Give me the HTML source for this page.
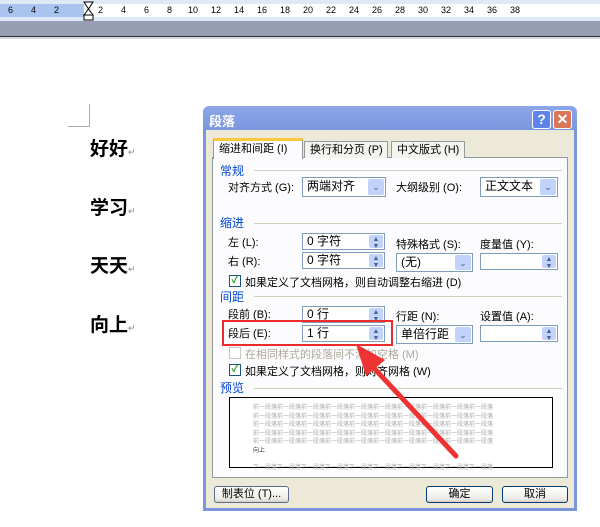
<!DOCTYPE html>
<html><head><meta charset="utf-8"><style>
*{margin:0;padding:0;box-sizing:border-box}
body{width:600px;height:527px;background:#fff;position:relative;overflow:hidden;font-family:"Liberation Sans","Noto Sans CJK SC",sans-serif;font-size:11px;color:#000}
.a{position:absolute;white-space:nowrap}
.doc{font-weight:bold;font-size:19px;left:90px}
.doc i{font-style:normal;font-weight:normal;font-size:9px;color:#888}
.grp{color:#0046d5;font-size:12px}
.ln{position:absolute;height:1px;background:#d0d0bf}
.box{position:absolute;background:#fff;border:1px solid #7f9db9;font-size:12px;padding:1px 0 0 4px;line-height:15px}
.sp{position:absolute;right:1px;top:1px;bottom:1px;width:14px;background:#c1d3fb;border-radius:2px;font-size:7px;line-height:7px;text-align:center;color:#4d6185;padding-top:1px}
.dd{position:absolute;right:1px;top:1px;bottom:1px;width:16px;background:#c1d3fb;border-radius:2px;color:#4d6185;font-size:9px;text-align:center;line-height:16px}
.chk{position:absolute;width:12px;height:12px;border:1px solid #1c5180;background:#fff;color:#21a121;font-size:10px;line-height:10px;text-align:center;font-weight:bold}
.btn{position:absolute;height:17px;border:1px solid #003c74;border-radius:3px;background:linear-gradient(#fff,#ecebe6 80%,#d6d0c5);text-align:center;line-height:15px;font-size:11px}
</style></head><body>
<div class="a" style="left:0;top:0;width:600px;height:21px;background:#fff;border-top:4px solid #dfe8f7;border-bottom:4px solid #dfe8f7"></div>
<div class="a" style="left:0;top:4px;width:84px;height:13px;background:#a9c4ee"></div>
<div class="a" style="left:0;top:4px;font-size:9px;line-height:13px">
<span class="a" style="left:8px">6</span><span class="a" style="left:31px">4</span><span class="a" style="left:54px">2</span>
<span class="a" style="left:98px">2</span><span class="a" style="left:121px">4</span><span class="a" style="left:144px">6</span><span class="a" style="left:167px">8</span><span class="a" style="left:188px">10</span><span class="a" style="left:211px">12</span><span class="a" style="left:234px">14</span><span class="a" style="left:257px">16</span><span class="a" style="left:280px">18</span><span class="a" style="left:303px">20</span><span class="a" style="left:326px">22</span><span class="a" style="left:349px">24</span><span class="a" style="left:372px">26</span><span class="a" style="left:395px">28</span><span class="a" style="left:418px">30</span><span class="a" style="left:441px">32</span><span class="a" style="left:464px">34</span><span class="a" style="left:487px">36</span><span class="a" style="left:510px">38</span></div>
<svg class="a" style="left:83px;top:1px" width="12" height="20"><path d="M1 1H10L5.5 8Z M5.5 8L1 14H10Z" fill="#fff" stroke="#000"/><rect x="1" y="14" width="9" height="5" fill="#fff" stroke="#000"/></svg>
<div class="a" style="left:0;top:21px;width:600px;height:15px;background:#979eb3"></div>
<div class="a" style="left:0;top:36px;width:600px;height:1px;background:#333"></div>
<div class="a" style="left:0;top:37px;width:600px;height:2px;background:#d4d7dd"></div>
<div class="a" style="left:89px;top:104px;width:1px;height:22px;background:#aaa"></div>
<div class="a" style="left:68px;top:126px;width:22px;height:1px;background:#aaa"></div>
<div class="a doc" style="top:134px">好好<i>↵</i></div>
<div class="a doc" style="top:193px">学习<i>↵</i></div>
<div class="a doc" style="top:251px">天天<i>↵</i></div>
<div class="a doc" style="top:310px">向上<i>↵</i></div>
<div class="a" style="left:203px;top:106px;width:374px;height:405px;border-radius:6px 6px 0 0;background:linear-gradient(#8ca6e8,#7a96df 25px,#7a96df)"></div>
<div class="a" style="left:206px;top:130px;width:368px;height:378px;background:#ece9d8"></div>
<div class="a" style="left:209px;top:111px;color:#fff;font-size:13px;font-weight:bold">段落</div>
<div class="a" style="left:532px;top:110px;width:19px;height:19px;border:1px solid #fff;border-radius:3px;background:#5f84e8;color:#fff;font-weight:bold;font-size:14px;text-align:center;line-height:17px">?</div>
<div class="a" style="left:553px;top:110px;width:19px;height:19px;border:1px solid #fff;border-radius:3px;background:#d9765a;color:#fff;font-weight:bold;font-size:14px;text-align:center;line-height:17px">✕</div>
<div class="a" style="left:212px;top:157px;width:356px;height:321px;background:#fcfcfe;border:1px solid #919b9c"></div>
<div class="a" style="left:304px;top:141px;width:84px;height:17px;background:#f3f3ef;border:1px solid #919b9c;border-bottom:none;font-size:11px;line-height:16px;padding-left:5px">换行和分页 (P)</div>
<div class="a" style="left:391px;top:141px;width:74px;height:17px;background:#f3f3ef;border:1px solid #919b9c;border-bottom:none;font-size:11px;line-height:16px;padding-left:5px">中文版式 (H)</div>
<div class="a" style="left:213px;top:138px;width:90px;height:21px;background:#fcfcfe;border:1px solid #919b9c;border-top:3px solid #ffc83c;border-bottom:none;font-size:11px;line-height:17px;padding-left:5px">缩进和间距 (I)</div>
<div class="a grp" style="left:220px;top:162px">常规</div><div class="ln" style="left:254px;top:170px;width:308px"></div>
<div class="a" style="left:228px;top:179px">对齐方式 (G):</div>
<div class="box" style="left:302px;top:177px;width:84px;height:20px">两端对齐<div class="dd">⌄</div></div>
<div class="a" style="left:396px;top:179px">大纲级别 (O):</div>
<div class="box" style="left:480px;top:177px;width:78px;height:20px">正文文本<div class="dd">⌄</div></div>
<div class="a grp" style="left:220px;top:214px">缩进</div><div class="ln" style="left:254px;top:223px;width:308px"></div>
<div class="a" style="left:228px;top:234px">左 (L):</div>
<div class="box" style="left:302px;top:233px;width:83px;height:17px;line-height:13px">0 字符<div class="sp">▲<br>▼</div></div>
<div class="a" style="left:396px;top:236px">特殊格式 (S):</div>
<div class="a" style="left:480px;top:236px">度量值 (Y):</div>
<div class="a" style="left:228px;top:253px">右 (R):</div>
<div class="box" style="left:302px;top:252px;width:83px;height:17px;line-height:13px">0 字符<div class="sp">▲<br>▼</div></div>
<div class="box" style="left:396px;top:253px;width:77px;height:19px">(无)<div class="dd">⌄</div></div>
<div class="box" style="left:480px;top:253px;width:78px;height:17px"><div class="sp">▲<br>▼</div></div>
<div class="chk" style="left:229px;top:275px">✓</div>
<div class="a" style="left:245px;top:274px">如果定义了文档网格，则自动调整右缩进 (D)</div>
<div class="a grp" style="left:220px;top:288px">间距</div><div class="ln" style="left:254px;top:296px;width:308px"></div>
<div class="a" style="left:228px;top:306px">段前 (B):</div>
<div class="box" style="left:302px;top:306px;width:83px;height:17px;line-height:13px">0 行<div class="sp">▲<br>▼</div></div>
<div class="a" style="left:396px;top:308px">行距 (N):</div>
<div class="a" style="left:480px;top:308px">设置值 (A):</div>
<div class="a" style="left:228px;top:325px">段后 (E):</div>
<div class="box" style="left:302px;top:325px;width:83px;height:17px;line-height:13px">1 行<div class="sp">▲<br>▼</div></div>
<div class="box" style="left:396px;top:325px;width:77px;height:19px">单倍行距<div class="dd">⌄</div></div>
<div class="box" style="left:480px;top:325px;width:78px;height:17px"><div class="sp">▲<br>▼</div></div>
<div class="a" style="left:222px;top:320px;width:171px;height:26px;border:2px solid #ee2b2b"></div>
<div class="chk" style="left:229px;top:347px;border-color:#cac8bb"></div>
<div class="a" style="left:245px;top:346px;color:#aca899">在相同样式的段落间不添加空格 (M)</div>
<div class="chk" style="left:229px;top:364px">✓</div>
<div class="a" style="left:245px;top:363px">如果定义了文档网格，则对齐网格 (W)</div>
<div class="a grp" style="left:220px;top:379px">预览</div><div class="ln" style="left:254px;top:388px;width:308px"></div>
<div class="a" style="left:229px;top:397px;width:324px;height:71px;background:#fff;border:1px solid #000"></div>
<div class="a" style="left:253px;top:404px;font-size:6px;line-height:8.5px;color:#aaa">前一段落前一段落前一段落前一段落前一段落前一段落前一段落前一段落前一段落前一段落<br>前一段落前一段落前一段落前一段落前一段落前一段落前一段落前一段落前一段落前一段落<br>前一段落前一段落前一段落前一段落前一段落前一段落前一段落前一段落前一段落前一段落<br>前一段落前一段落前一段落前一段落前一段落前一段落前一段落前一段落前一段落前一段落<br>前一段落前一段落前一段落前一段落前一段落前一段落前一段落前一段落前一段落前一段落<br><span style="color:#333">向上</span><br><br>下一段落下一段落下一段落下一段落下一段落下一段落下一段落下一段落下一段落下一段落</div>
<div class="btn" style="left:214px;top:486px;width:75px;border-color:#5b6c8a">制表位 (T)...</div>
<div class="btn" style="left:426px;top:486px;width:67px">确定</div>
<div class="btn" style="left:502px;top:486px;width:66px">取消</div>
<svg class="a" style="left:0;top:0" width="600" height="527"><path d="M456 456 L372 366" stroke="#ee3333" stroke-width="5" stroke-linecap="round"/><path d="M356 344 L385 360 L366 376 Z" fill="#ee3333"/></svg>
</body></html>
